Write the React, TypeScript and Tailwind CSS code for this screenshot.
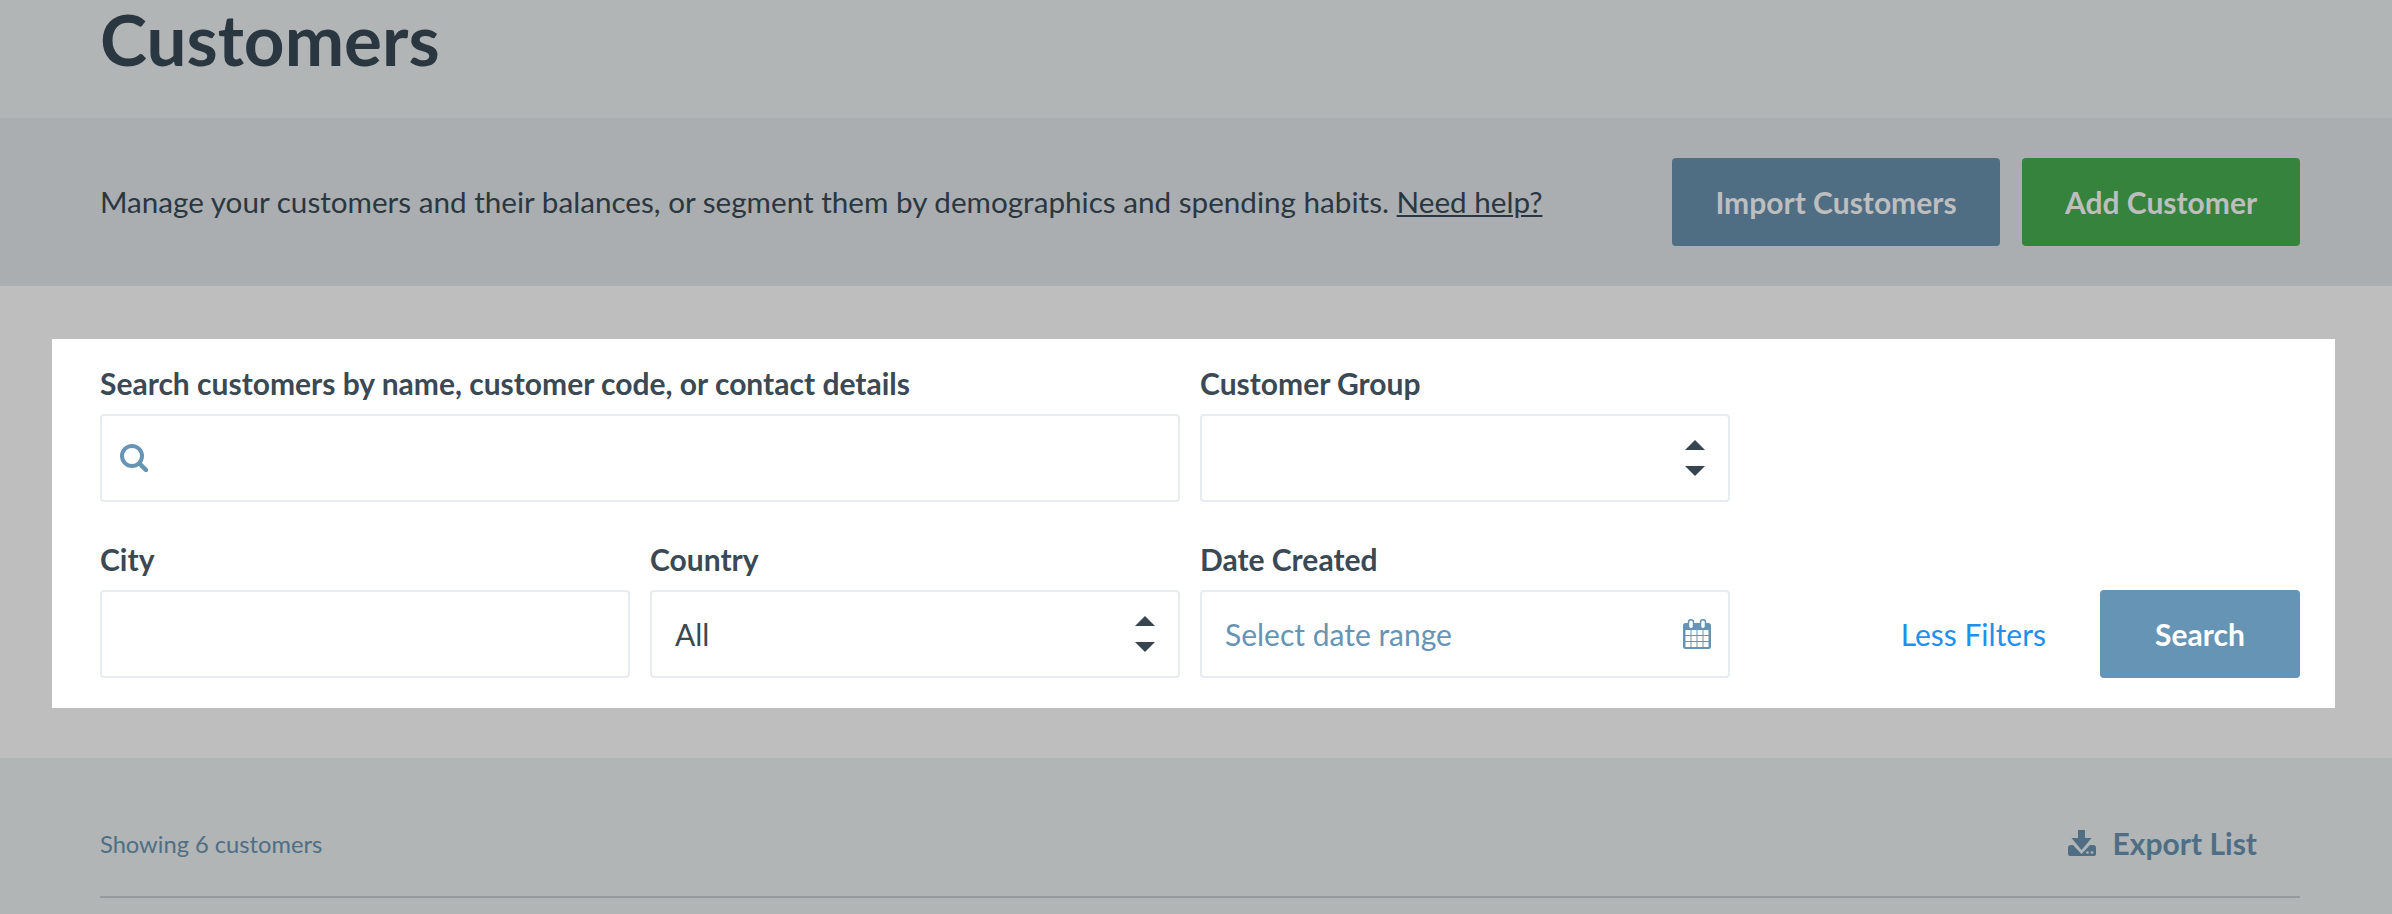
function Arrows() {
  return (
    <svg width="20" height="36" viewBox="0 0 20 36" className="shrink-0 fill-[#36454f]">
      <path d="M10 0 20 10H0Z" />
      <path d="M0 26H20L10 36Z" />
    </svg>
  );
}

function SearchIcon() {
  return (
    <svg width="28" height="28" viewBox="0 0 28 28" className="shrink-0" fill="none" stroke="#6694b5">
      <circle cx="12" cy="12" r="10" strokeWidth="4" />
      <path d="M19.5 19.5 26 26" strokeWidth="4.5" strokeLinecap="round" />
    </svg>
  );
}

function CalendarIcon() {
  return (
    <svg width="28" height="30" viewBox="0 0 28 30" className="shrink-0">
      <rect x="0" y="4" width="28" height="26" rx="2.5" fill="#6694b5" />
      <rect x="5.5" y="0.75" width="5" height="9" rx="2.5" fill="#fff" stroke="#6694b5" strokeWidth="1.5" />
      <rect x="17.5" y="0.75" width="5" height="9" rx="2.5" fill="#fff" stroke="#6694b5" strokeWidth="1.5" />
      <g fill="#fff">
        {[2.5, 8.5, 14.5, 20.5].map((x) =>
          [11, 17, 23].map((y) => <rect key={`${x}-${y}`} x={x} y={y} width="5" height="5" />)
        )}
      </g>
    </svg>
  );
}

function ExportIcon() {
  return (
    <svg width="28" height="26" viewBox="0 0 28 26" className="shrink-0">
      <path d="M10 0H17V8H23.5L13.5 20 3.5 8H10Z" fill="#4f6e84" />
      <path
        d="M0 18a3 3 0 0 1 3-3H5L13.5 24 22 15H25a3 3 0 0 1 3 3V24a2 2 0 0 1-2 2H2a2 2 0 0 1-2-2Z"
        fill="#4f6e84"
      />
      <circle cx="19.5" cy="22.5" r="1.3" fill="#b1b5b6" />
      <circle cx="24" cy="22.5" r="1.3" fill="#b1b5b6" />
    </svg>
  );
}

function Label({ children }: { children: React.ReactNode }) {
  return <div className="mb-[11px] h-[40px] text-[30px] font-bold leading-[40px] text-[#3a4953]">{children}</div>;
}

const box = "flex h-[88px] items-center rounded-[4px] border-2 border-[#e6ecf0] bg-white";

export default function App() {
  return (
    <div className="h-[914px] overflow-hidden bg-[#bebebe] font-['Lato','Liberation_Sans',sans-serif]">
      <div className="h-[118px] bg-[#b1b5b6] px-[100px]">
        <h1 className="text-[71px] font-bold leading-[78px] text-[#2b3740]">Customers</h1>
      </div>
      <div className="flex h-[168px] items-center justify-between bg-[#aaaeb1] pl-[100px] pr-[92px]">
        <p className="text-[29.65px] leading-[40px] text-[#2b3740]">
          Manage your customers and their balances, or segment them by demographics and spending habits.{" "}
          <a className="underline">Need help?</a>
        </p>
        <div className="flex gap-[22px]">
          <button className="flex h-[88px] w-[328px] items-center justify-center rounded-[4px] bg-[#4f6e84] text-[30px] font-bold text-[#bebebe]">
            Import Customers
          </button>
          <button className="flex h-[88px] w-[278px] items-center justify-center rounded-[4px] bg-[#36833d] text-[30px] font-bold text-[#bebebe]">
            Add Customer
          </button>
        </div>
      </div>
      <div className="h-[472px] pt-[53px]">
        <div className="ml-[52px] mr-[57px] h-[369px] bg-white pl-[48px] pr-[35px] pt-[24px]">
          <div className="grid grid-cols-[530px_530px_530px_1fr] gap-x-[20px] gap-y-[37px]">
            <div className="col-span-2">
              <Label>Search customers by name, customer code, or contact details</Label>
              <div className={`${box} pl-[18px]`}>
                <SearchIcon />
              </div>
            </div>
            <div>
              <Label>Customer Group</Label>
              <div className={`${box} justify-end pr-[23px]`}>
                <Arrows />
              </div>
            </div>
            <div />
            <div>
              <Label>City</Label>
              <div className={box} />
            </div>
            <div>
              <Label>Country</Label>
              <div className={`${box} justify-between px-[23px] text-[30px] text-[#3a4953]`}>
                All
                <Arrows />
              </div>
            </div>
            <div>
              <Label>Date Created</Label>
              <div className={`${box} justify-between pl-[23px] pr-[17px] text-[30px] text-[#6694b5]`}>
                Select date range
                <CalendarIcon />
              </div>
            </div>
            <div className="flex items-end justify-end gap-[54px]">
              <a className="flex h-[88px] items-center text-[30px] text-[#1e90ee]">Less Filters</a>
              <button className="h-[88px] w-[200px] rounded-[4px] bg-[#6694b5] text-[30px] font-bold text-white">
                Search
              </button>
            </div>
          </div>
        </div>
      </div>
      <div className="h-[156px] bg-[#b1b5b6] pl-[100px] pr-[92px] pt-[60px]">
        <div className="flex h-[80px] items-start justify-between border-b-2 border-[#949a9c]">
          <span className="mt-[10px] text-[23.7px] leading-[32px] text-[#4f6e84]">Showing 6 customers</span>
          <span className="mr-[43px] mt-[5px] flex items-center gap-[17px] text-[30px] font-bold leading-[40px] text-[#4f6e84]">
            <ExportIcon />
            Export List
          </span>
        </div>
      </div>
    </div>
  );
}
